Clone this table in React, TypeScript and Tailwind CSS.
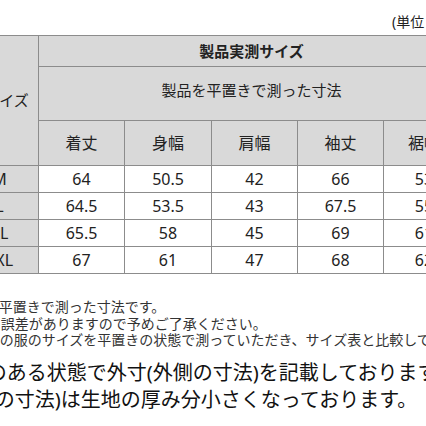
const sizes = [
  { label: 'M', values: ['64', '50.5', '42', '66', '53'] },
  { label: 'L', values: ['64.5', '53.5', '43', '67.5', '55'] },
  { label: 'XL', values: ['65.5', '58', '45', '69', '61'] },
  { label: 'XXL', values: ['67', '61', '47', '68', '62'] },
];

const heads = ['着丈', '身幅', '肩幅', '袖丈', '裾幅'];

const font = { fontFamily: '"Noto Sans", "Noto Sans CJK JP", sans-serif' };

export default function App() {
  return (
    <div className="w-[426px] h-[426px] overflow-hidden bg-white text-[#222]" style={font}>
      {/* unit label */}
      <div className="h-[35px] pt-[13px] pl-[392px] text-[14px] leading-[18px] whitespace-nowrap">(単位：cm)</div>

      {/* size table */}
      <div className="ml-[-26px] w-max bg-[#8c8c8c] p-px grid gap-px grid-cols-[63px_85px_86px_85px_85px_80px] grid-rows-[30px_53px_44px_26px_26px_26px_26px]">
        <div className="row-span-3 bg-[#d9d9d9] flex items-center justify-center text-[15px]">サイズ</div>
        <div className="col-span-5 bg-[#d9d9d9] flex items-center justify-center text-[15px] font-bold">製品実測サイズ</div>
        <div className="col-span-5 bg-[#d9d9d9] flex items-center justify-center pb-[6px] text-[15px]">製品を平置きで測った寸法</div>
        {heads.map((h) => (
          <div key={h} className="bg-[#d9d9d9] flex items-center justify-center text-[16px]">
            {h}
          </div>
        ))}
        {sizes.map((s) => (
          <>
            <div key={s.label} className="bg-[#d9d9d9] flex items-center justify-center pr-[14px] text-[16px] leading-none">
              {s.label}
            </div>
            {s.values.map((v, i) => (
              <div key={s.label + i} className="bg-white flex items-center justify-center text-[16px] leading-none">
                {v}
              </div>
            ))}
          </>
        ))}
      </div>

      {/* notes */}
      <div className="mt-[25px] text-[14px] leading-[16.5px] text-[#333] whitespace-nowrap">
        <p className="ml-[-13px]">※平置きで測った寸法です。</p>
        <p className="ml-[-53px]">※多少の誤差がありますので予めご了承ください。</p>
        <p className="ml-[-68px]">※お手持ちの服のサイズを平置きの状態で測っていただき、サイズ表と比較してご検討ください。</p>
      </div>
      <div className="mt-[10px] text-[20px] leading-[27px] text-[#111] whitespace-nowrap">
        <p className="ml-[-90px]">※伸縮性のある状態で外寸(外側の寸法)を記載しております。</p>
        <p className="ml-[-108px]">※内寸(内側の寸法)は生地の厚み分小さくなっております。</p>
      </div>
    </div>
  );
}
